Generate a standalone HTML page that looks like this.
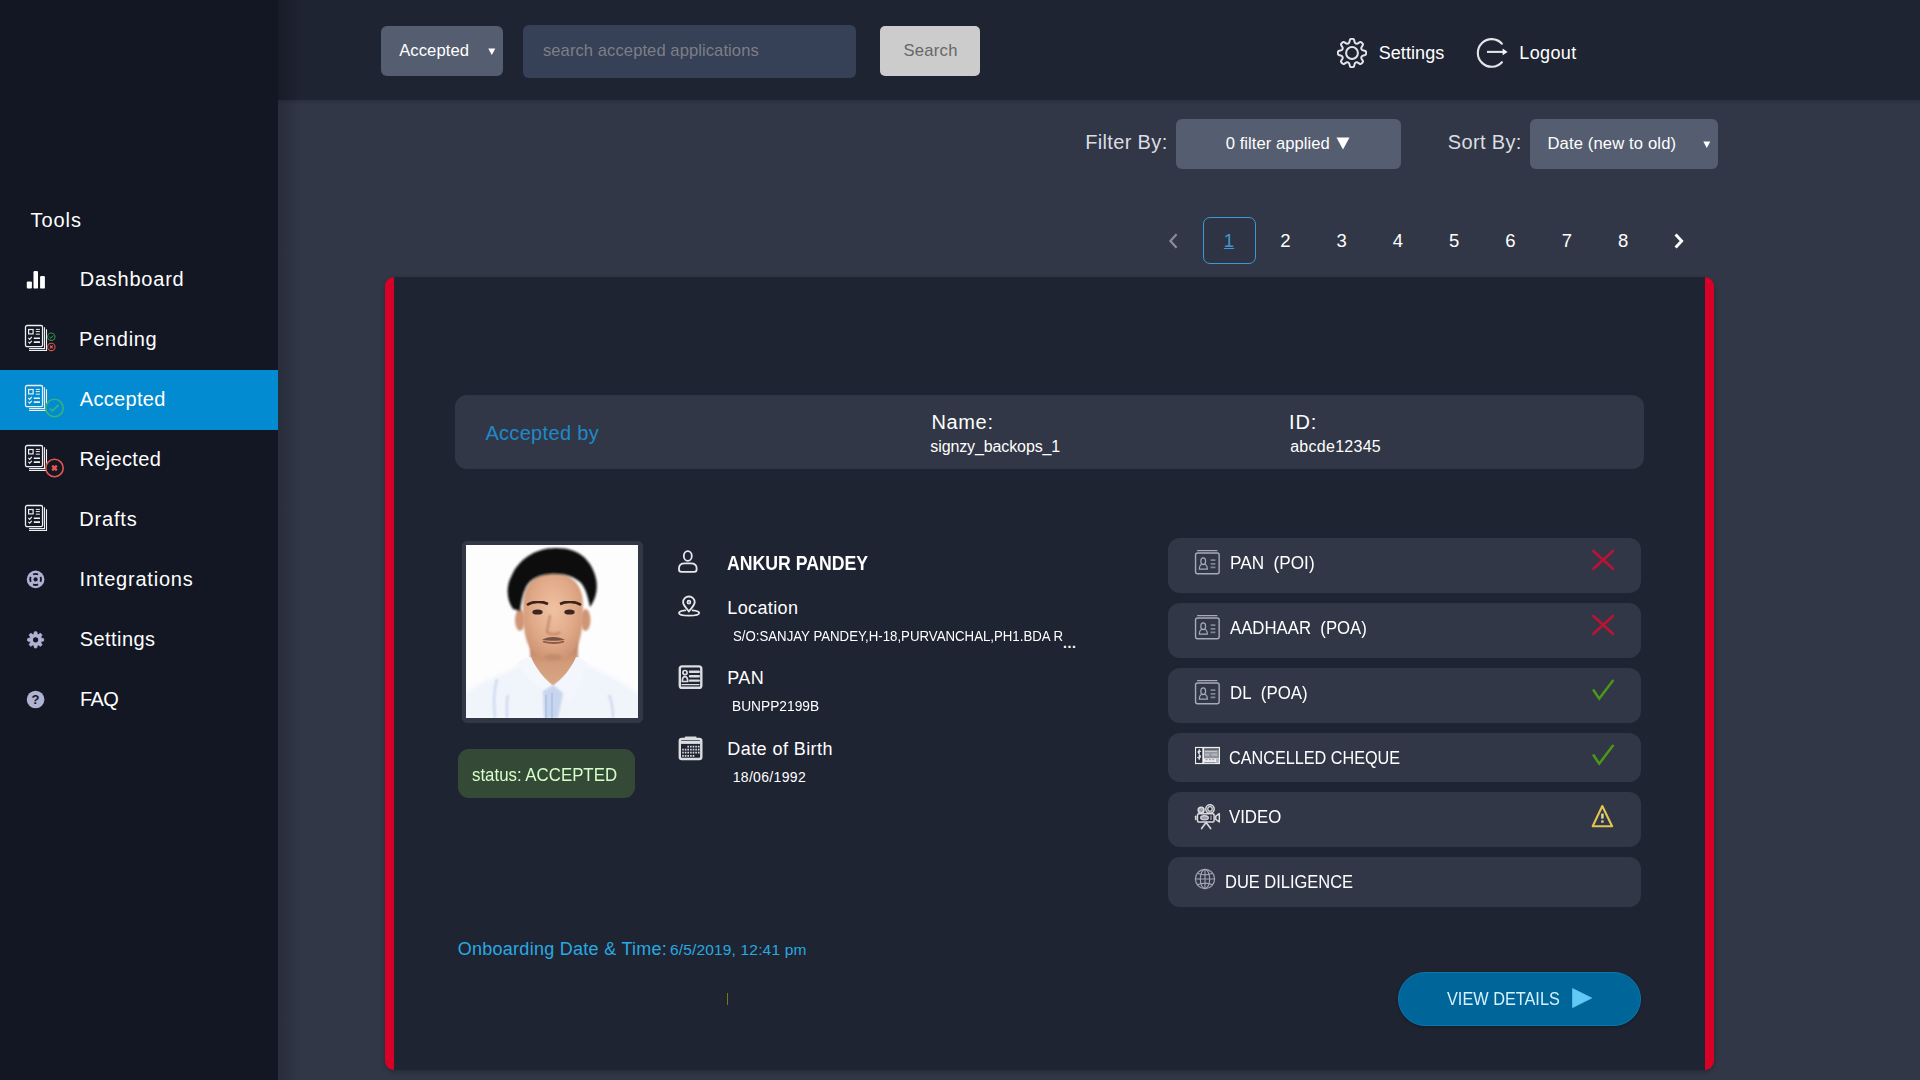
<!DOCTYPE html>
<html lang="en">
<head>
<meta charset="utf-8">
<title>Accepted Applications</title>
<style>
*{box-sizing:border-box;margin:0;padding:0}
html,body{width:1920px;height:1080px;overflow:hidden;background:#313746;font-family:"Liberation Sans",sans-serif;color:#fff}
.abs{position:absolute}
#sidebar{position:absolute;left:0;top:0;width:278px;height:1080px;background:#131623}
#topbar{position:absolute;left:278px;top:0;width:1642px;height:100px;background:#1f2433}
#topbar:before{content:"";position:absolute;left:0;top:0;width:24px;height:100px;background:linear-gradient(90deg,rgba(10,12,22,.35),rgba(10,12,22,0))}
#main:after{content:"";position:absolute;left:278px;top:100px;width:1642px;height:5px;background:linear-gradient(180deg,rgba(10,12,22,.16),rgba(10,12,22,0))}
#main:before{content:"";position:absolute;left:278px;top:100px;width:24px;height:980px;background:linear-gradient(90deg,rgba(10,12,22,.22),rgba(10,12,22,0))}
.os{font-family:"Liberation Sans",sans-serif}

.tb{position:absolute;white-space:nowrap}
.ctl{position:absolute;background:#555d70;border-radius:6px;color:#fff;font-size:16.6px}
.row{position:absolute;left:1168px;width:473px;background:#313746;border-radius:12px}
.t{position:absolute;white-space:nowrap;line-height:1}
.pg{position:absolute;top:229px;font-size:18.5px;line-height:24px;width:40px;text-align:center}
</style>
</head>
<body>
<div id="main">
<div id="sidebar">
  <span class="t" id="n_t" style="left:30.62px;top:209.71px;font-size:20px;letter-spacing:0.915px">Tools</span>
  <div class="abs" style="left:0;top:370px;width:278px;height:60px;background:#028bd0"></div>
  <span class="t" id="n0" style="left:79.70px;top:268.80px;font-size:20px;letter-spacing:0.769px">Dashboard</span>
  <span class="t" id="n1" style="left:79.12px;top:328.80px;font-size:20px;letter-spacing:0.702px">Pending</span>
  <span class="t" id="n2" style="left:79.82px;top:388.91px;font-size:20px;letter-spacing:0.303px">Accepted</span>
  <span class="t" id="n3" style="left:79.56px;top:448.91px;font-size:20px;letter-spacing:0.334px">Rejected</span>
  <span class="t" id="n4" style="left:79.13px;top:508.71px;font-size:20px;letter-spacing:0.843px">Drafts</span>
  <span class="t" id="n5" style="left:79.60px;top:568.71px;font-size:20px;letter-spacing:0.783px">Integrations</span>
  <span class="t" id="n6" style="left:79.68px;top:628.71px;font-size:20px;letter-spacing:0.455px">Settings</span>
  <span class="t" id="n7" style="left:79.90px;top:688.71px;font-size:20px;letter-spacing:-0.556px">FAQ</span>
  <svg class="abs" style="left:0;top:0" width="278" height="1080" viewBox="0 0 278 1080">
<defs><g id="doc"><g fill="none" stroke="#eeeff2"><rect x="1.5" y="1.5" width="17.05" height="21.15" rx="1.6" stroke-width="1.3"/><path d="M5.1 24.6H20.5V3.2" stroke-width="1.1"/><path d="M5 26.5H22.5V5.2" stroke-width="1.1"/><rect x="4.6" y="5.5" width="4.5" height="4.4" stroke-width="1.2"/><path d="M11.8 5.4H15.9M11.8 7.6H15.9M11.8 10.2H15.9" stroke-width="1"/><path d="M4.4 14L5.7 15.3 7.8 12.9M4.4 17.9L5.7 19.2 7.8 16.8" stroke-width="1.2"/><path d="M9.8 14.2H16M9.8 18.1H16" stroke-width="1.6"/></g></g></defs>
<g fill="#fff"><rect x="26.8" y="281.6" width="5.1" height="7" rx="1"/><rect x="33.5" y="271" width="4.5" height="17.6" rx="1.2"/><rect x="40.1" y="276" width="4.8" height="12.6" rx="1.2"/></g>
<use href="#doc" x="24" y="324"/>
<circle cx="51.3" cy="336.7" r="3.7" fill="#131623" stroke="#2f8f45" stroke-width="1.1"/><path d="M49.4 336.8l1.4 1.4 2.5-2.8" fill="none" stroke="#3aa655" stroke-width="1"/>
<circle cx="51.3" cy="346.9" r="3.7" fill="#131623" stroke="#d9534f" stroke-width="1.1"/><path d="M49.9 345.5l2.8 2.8M52.7 345.5l-2.8 2.8" fill="none" stroke="#e0564f" stroke-width="1.1"/>
<use href="#doc" x="24" y="384"/>
<circle cx="54.5" cy="408" r="8.7" fill="#028bd0" stroke="#35b279" stroke-width="1.6"/><path d="M49.9 408.6l2.6 2.3 6.2-6.1" fill="none" stroke="#35b279" stroke-width="1.7"/>
<use href="#doc" x="24" y="444"/>
<circle cx="54.5" cy="468" r="8.7" fill="#131623" stroke="#e2574f" stroke-width="1.6"/><path d="M52.2 465.7l4.6 4.6M56.8 465.7l-4.6 4.6" fill="none" stroke="#e2574f" stroke-width="2.4"/>
<use href="#doc" x="24" y="504"/>
<circle cx="35.6" cy="579.4" r="8.8" fill="#b0b2d2"/><circle cx="35.6" cy="579.4" r="2.1" fill="#131623"/><path d="M33.10 574.50 A5.50 5.50 0 0 1 38.10 574.50M40.50 576.90 A5.50 5.50 0 0 1 40.50 581.90M38.10 584.30 A5.50 5.50 0 0 1 33.10 584.30M30.70 581.90 A5.50 5.50 0 0 1 30.70 576.90" fill="none" stroke="#131623" stroke-width="1.9"/>
<path d="M33.42 634.36Q33.97 634.13 34.06 633.53L34.23 632.30Q34.32 631.70 34.92 631.70L36.28 631.70Q36.88 631.70 36.97 632.30L37.14 633.53Q37.23 634.13 37.78 634.36L37.91 634.41Q38.46 634.64 38.94 634.28L39.94 633.53Q40.42 633.17 40.84 633.59L41.81 634.56Q42.23 634.98 41.87 635.46L41.12 636.46Q40.76 636.94 40.99 637.49L41.04 637.62Q41.27 638.17 41.87 638.26L43.10 638.43Q43.70 638.52 43.70 639.12L43.70 640.48Q43.70 641.08 43.10 641.17L41.87 641.34Q41.27 641.43 41.04 641.98L40.99 642.11Q40.76 642.66 41.12 643.14L41.87 644.14Q42.23 644.62 41.81 645.04L40.84 646.01Q40.42 646.43 39.94 646.07L38.94 645.32Q38.46 644.96 37.91 645.19L37.78 645.24Q37.23 645.47 37.14 646.07L36.97 647.30Q36.88 647.90 36.28 647.90L34.92 647.90Q34.32 647.90 34.23 647.30L34.06 646.07Q33.97 645.47 33.42 645.24L33.29 645.19Q32.74 644.96 32.26 645.32L31.26 646.07Q30.78 646.43 30.36 646.01L29.39 645.04Q28.97 644.62 29.33 644.14L30.08 643.14Q30.44 642.66 30.21 642.11L30.16 641.98Q29.93 641.43 29.33 641.34L28.10 641.17Q27.50 641.08 27.50 640.48L27.50 639.12Q27.50 638.52 28.10 638.43L29.33 638.26Q29.93 638.17 30.16 637.62L30.21 637.49Q30.44 636.94 30.08 636.46L29.33 635.46Q28.97 634.98 29.39 634.56L30.36 633.59Q30.78 633.17 31.26 633.53L32.26 634.28Q32.74 634.64 33.29 634.41Z" fill="#b0b2d2" stroke="#b0b2d2" stroke-width="0.8" stroke-linejoin="round"/><circle cx="35.6" cy="639.8" r="2.6" fill="#131623"/>
<circle cx="35.6" cy="699.5" r="8.8" fill="#b0b2d2"/><text x="35.6" y="704.1" text-anchor="middle" font-family="Liberation Sans, sans-serif" font-weight="bold" font-size="13" fill="#131623">?</text>
</svg>
</div>
<div id="topbar">

  <div class="ctl" style="left:103px;top:26px;width:122px;height:50px"><span class="t" id="t_sel" style="left:18.15px;top:17.11px;font-size:16.6px;letter-spacing:0.093px">Accepted</span>
    <svg class="abs" style="left:107.2px;top:22px" width="8" height="8" viewBox="0 0 8 8"><path d="M0.3 0.5h7L3.8 7z" fill="#fff"/></svg></div>
  <div class="abs" style="left:245px;top:25px;width:333px;height:52.5px;background:#364057;border-radius:6px"><span class="t" id="t_ph" style="left:19.94px;top:18.11px;font-size:16.6px;color:#7d7f85;letter-spacing:0.066px">search accepted applications</span></div>
  <div class="abs" style="left:602px;top:26px;width:100px;height:50px;background:#cccccc;border-radius:5px"><span class="t" id="t_sb" style="left:23.56px;top:17.11px;font-size:16.6px;color:#666;letter-spacing:0.252px">Search</span></div>
  <svg class="abs" style="left:1059px;top:38px" width="30" height="30" viewBox="0 0 30 30" fill="none" stroke="#e4e5ea" stroke-width="2" stroke-linejoin="round"><path d="M11.09 5.55Q12.25 5.07 12.51 3.60L12.74 2.32Q13.01 0.84 14.51 0.84L15.49 0.84Q16.99 0.84 17.26 2.32L17.49 3.60Q17.75 5.07 18.91 5.55L18.91 5.55Q20.07 6.04 21.30 5.18L22.37 4.44Q23.61 3.58 24.67 4.64L25.36 5.33Q26.42 6.39 25.56 7.63L24.82 8.70Q23.96 9.93 24.45 11.09L24.45 11.09Q24.93 12.25 26.40 12.51L27.68 12.74Q29.16 13.01 29.16 14.51L29.16 15.49Q29.16 16.99 27.68 17.26L26.40 17.49Q24.93 17.75 24.45 18.91L24.45 18.91Q23.96 20.07 24.82 21.30L25.56 22.37Q26.42 23.61 25.36 24.67L24.67 25.36Q23.61 26.42 22.37 25.56L21.30 24.82Q20.07 23.96 18.91 24.45L18.91 24.45Q17.75 24.93 17.49 26.40L17.26 27.68Q16.99 29.16 15.49 29.16L14.51 29.16Q13.01 29.16 12.74 27.68L12.51 26.40Q12.25 24.93 11.09 24.45L11.09 24.45Q9.93 23.96 8.70 24.82L7.63 25.56Q6.39 26.42 5.33 25.36L4.64 24.67Q3.58 23.61 4.44 22.37L5.18 21.30Q6.04 20.07 5.55 18.91L5.55 18.91Q5.07 17.75 3.60 17.49L2.32 17.26Q0.84 16.99 0.84 15.49L0.84 14.51Q0.84 13.01 2.32 12.74L3.60 12.51Q5.07 12.25 5.55 11.09L5.55 11.09Q6.04 9.93 5.18 8.70L4.44 7.63Q3.58 6.39 4.64 5.33L5.33 4.64Q6.39 3.58 7.63 4.44L8.70 5.18Q9.93 6.04 11.09 5.55Z"/><circle cx="15" cy="15" r="5.9"/></svg>
  <span class="t" id="t_set" style="left:1100.72px;top:44.11px;font-size:18px;letter-spacing:0.065px">Settings</span>
  <svg class="abs" style="left:1198px;top:37px" width="34" height="32" viewBox="0 0 34 32" fill="none" stroke="#e4e5ea" stroke-width="2.1" stroke-linecap="round"><path d="M25.9 6.72A13.8 13.8 0 1 0 25.9 25.18"/><path d="M11 14.9h16" stroke-linecap="butt"/><path d="M26.6 11.6L31.6 14.9l-5 3.3z" fill="#f4f4f6" stroke="none"/></svg>
  <span class="t" id="t_lo" style="left:1241.32px;top:44.11px;font-size:18px;letter-spacing:0.354px">Logout</span>
</div>

<span class="t" id="t_fb" style="left:1085.19px;top:131.76px;font-size:20px;color:#dcdde2;letter-spacing:0.346px">Filter By:</span>
<div class="ctl" style="left:1176px;top:119px;width:225px;height:50px"><span class="t" id="t_fa" style="left:49.71px;top:16.71px;font-size:16.6px;letter-spacing:0.049px">0 filter applied</span>
  <svg class="abs" style="left:160px;top:18px" width="14" height="13" viewBox="0 0 14 13"><path d="M0.5 0.5h13L7 12.5z" fill="#fff"/></svg></div>
<span class="t" id="t_so" style="left:1447.76px;top:131.71px;font-size:20px;color:#dcdde2;letter-spacing:0.346px">Sort By:</span>
<div class="ctl" style="left:1530px;top:119px;width:188px;height:50px"><span class="t" id="t_dt" style="left:17.41px;top:16.71px;font-size:16.6px;letter-spacing:0.144px">Date (new to old)</span>
  <svg class="abs" style="left:172.5px;top:21.5px" width="8" height="8" viewBox="0 0 8 8"><path d="M0.3 0.5h7L3.8 7z" fill="#fff"/></svg></div>

<svg class="abs" style="left:1166px;top:231px" width="14" height="20" viewBox="0 0 14 20" fill="none" stroke="#8a8d96" stroke-width="2.2"><path d="M10.6 3.2L4.4 10l6.2 6.8"/></svg>
<div class="abs" style="left:1203px;top:217px;width:52.5px;height:46.5px;border:1.5px solid #3f97d3;border-radius:7px;background:#2e3443"></div>
<span class="pg" id="p1" style="left:1209px;color:#3f97d3;text-decoration:underline">1</span>
<span class="pg" id="p2" style="left:1265.3px">2</span>
<span class="pg" id="p3" style="left:1321.6px">3</span>
<span class="pg" id="p4" style="left:1377.9px">4</span>
<span class="pg" id="p5" style="left:1434.2px">5</span>
<span class="pg" id="p6" style="left:1490.5px">6</span>
<span class="pg" id="p7" style="left:1546.8px">7</span>
<span class="pg" id="p8" style="left:1603.1px">8</span>
<svg class="abs" style="left:1672px;top:231px" width="14" height="20" viewBox="0 0 14 20" fill="none" stroke="#fff" stroke-width="2.9"><path d="M3.6 3.4L9.7 10l-6.1 6.6"/></svg>

<div id="card" class="abs" style="left:385px;top:277px;width:1329px;height:793px;background:#1f2433;border-left:9px solid #d80027;border-right:9px solid #d80027;border-radius:9px;box-shadow:0 2px 5px rgba(0,0,0,.25)"></div>

<div class="abs" style="left:455px;top:395px;width:1189px;height:74px;background:#313746;border-radius:12px"></div>
<span class="t" id="t_ab" style="left:485.38px;top:422.80px;font-size:20px;color:#2089c9;letter-spacing:0.321px">Accepted by</span>
<span class="t" id="t_nm" style="left:931.39px;top:412.21px;font-size:20px;letter-spacing:0.664px">Name:</span>
<span class="t" id="t_nv" style="left:930.36px;top:438.80px;font-size:16px;letter-spacing:-0.118px">signzy_backops_1</span>
<span class="t" id="t_id" style="left:1289.01px;top:412.21px;font-size:20px;letter-spacing:0.900px">ID:</span>
<span class="t" id="t_iv" style="left:1290.16px;top:438.80px;font-size:16px;letter-spacing:0.277px">abcde12345</span>

<div class="abs" style="left:461.5px;top:540.5px;width:181px;height:182px;background:#313746;border-radius:5px"></div>
<svg class="abs" style="left:466px;top:545px" width="172" height="173" viewBox="0 0 172 173">
<defs>
<filter id="b1" x="-20%" y="-20%" width="140%" height="140%"><feGaussianBlur stdDeviation="1.3"/></filter>
<filter id="b2" x="-20%" y="-20%" width="140%" height="140%"><feGaussianBlur stdDeviation="2.4"/></filter>
<filter id="b3" x="-20%" y="-20%" width="140%" height="140%"><feGaussianBlur stdDeviation="0.7"/></filter>
<radialGradient id="skin" cx="0.5" cy="0.42" r="0.62"><stop offset="0" stop-color="#f0c2a3"/><stop offset="0.6" stop-color="#e0a987"/><stop offset="1" stop-color="#c9906f"/></radialGradient>
<linearGradient id="neck" x1="0" y1="0" x2="0" y2="1"><stop offset="0" stop-color="#b87e5e"/><stop offset="0.5" stop-color="#d39c7a"/><stop offset="1" stop-color="#d9a685"/></linearGradient>
<clipPath id="pc"><rect width="172" height="173"/></clipPath>
</defs>
<g clip-path="url(#pc)">
<rect width="172" height="173" fill="#fdfdfe"/>
<!-- shirt -->
<path d="M-4 173V150C14 136 40 128 58 118L87 140L117 118C136 127 160 138 176 152V173Z" fill="#f0f4fb" filter="url(#b2)"/>
<path d="M31 134C27 148 28 160 29 173M42 150C40 158 41 166 41 173M143 150C147 158 147 166 147 173" stroke="#c9d6ee" stroke-width="2" fill="none" filter="url(#b1)"/>
<!-- neck -->
<path d="M64 96V118C70 128 80 136 87 141C95 135 106 127 112 117V96Z" fill="url(#neck)" filter="url(#b1)"/>
<!-- collar -->
<path d="M51 118C56 114 61 112 65 112C70 124 79 134 87 141L80 147C68 140 57 130 51 118Z" fill="#f4f7fc" filter="url(#b3)"/>
<path d="M121 118C117 114 113 112 110 112C105 124 96 134 87 141L103 158C111 146 118 132 121 118Z" fill="#f3f6fc" filter="url(#b3)"/>
<path d="M77 146L87 140L97 148L92 173H78Z" fill="#c7d6ee" filter="url(#b1)"/>
<path d="M80 150V173M86 148V173" stroke="#9fb5dc" stroke-width="1" filter="url(#b3)"/>
<!-- ears -->
<ellipse cx="54" cy="75" rx="5" ry="11" fill="#cf9574" filter="url(#b1)"/>
<ellipse cx="119.5" cy="75" rx="5" ry="11" fill="#cf9574" filter="url(#b1)"/>
<!-- face -->
<path d="M57 60C57 38 70 28 87 28S117 38 117 60C117 84 115 99 106 108C99 114 93 116.5 87 116.5S75 114 68 108C59 99 57 84 57 60Z" fill="url(#skin)" filter="url(#b1)"/>
<!-- hair -->
<path d="M47 64C40 54 40 40 46 30C52 16 68 3 90 3C112 3 124 14 129 30C133 42 130 54 124 62C122 52 120 44 115 38C108 31 96 28 84 29C72 30 64 34 60 42C56 50 55 58 54 66Z" fill="#0c0c11" filter="url(#b1)"/>
<!-- brows & eyes -->
<path d="M61 60C67 56 76 56 82 59M94 59C100 56 109 56 115 60" stroke="#3a241c" stroke-width="2.6" fill="none" filter="url(#b3)"/>
<ellipse cx="71.5" cy="67" rx="5.2" ry="2.6" fill="#3b2620" filter="url(#b3)"/>
<ellipse cx="103.5" cy="67" rx="5.2" ry="2.6" fill="#3b2620" filter="url(#b3)"/>
<!-- nose shading -->
<path d="M84 70C83 78 81 84 81 87C84 90 91 90 94 87" stroke="#c08562" stroke-width="2" fill="none" filter="url(#b1)"/>
<!-- mustache / mouth -->
<path d="M76 95C81 91 93 91 99 95C93 96 82 96 76 95Z" fill="#7a5346" filter="url(#b3)"/>
<path d="M77 96.5C83 98.5 93 98.5 98 96.5" stroke="#8c5a4a" stroke-width="1.8" fill="none" filter="url(#b3)"/>
<ellipse cx="87" cy="112" rx="9" ry="3" fill="#b58568" opacity=".6" filter="url(#b1)"/>
</g>
</svg>
<div class="abs" style="left:458px;top:749px;width:177px;height:49px;background:#354a36;border-radius:11px"></div>
<span class="t" id="t_st" style="left:471.60px;top:766.80px;font-size:17.5px;color:#d6ffca;transform-origin:0 0;transform:scaleX(0.9622)">status: ACCEPTED</span>

<svg class="abs" style="left:670px;top:540px" width="40" height="230" viewBox="670 540 40 230" fill="none" stroke="#e6e7eb" stroke-width="1.8" stroke-linejoin="round" stroke-linecap="round">
<path d="M679 569.6V568C679 564.6 681.4 563.3 684.8 563.3H690.8C694.2 563.3 696.6 564.6 696.6 568V569.6Q696.6 571.9 694.3 571.9H681.3Q679 571.9 679 569.6Z"/><ellipse cx="687.8" cy="556" rx="4" ry="4.9" fill="#1f2433"/>
<path d="M688.9 611.6C686.4 607.6 683.1 605.6 683.1 602.3A5.8 5.8 0 1 1 694.7 602.3C694.7 605.6 691.4 607.6 688.9 611.6Z"/><circle cx="688.9" cy="602.2" r="1.7" fill="#9a9ca6" stroke-width="1.3"/><path d="M685.2 610.3C681.5 610.7 679 611.7 679 613C679 614.7 683.4 615.7 689 615.7S699.2 614.7 699.2 613C699.2 611.7 696.5 610.7 692.6 610.3"/>
<rect x="679.8" y="666.4" width="21.5" height="21.4" rx="2.4" stroke-width="2.4" stroke="#dcdde1"/><g stroke="#dcdde1" stroke-width="1.7"><circle cx="685" cy="672.6" r="2.1"/><path d="M682.3 681.5C682.3 678.2 683.5 676.6 685 676.6S687.7 678.2 687.7 681.5Z"/><path d="M690 671.8H698.8M690 676.3H698.8M690 680.6H698.8" stroke-width="2.4"/><path d="M682 684.6H699" stroke-width="1.3"/></g>
<rect x="679.8" y="739" width="21.5" height="20" rx="2" stroke-width="2.4" stroke="#dcdde1"/><path d="M680.5 742.4H700.6" stroke="#dcdde1" stroke-width="3" stroke-linecap="butt"/><path d="M685.5 737.4H695.8" stroke="#d9dade" stroke-width="1.6"/><path d="M687.4 746.6h1.6M690.1 746.6h1.6M692.7 746.6h1.6M695.3 746.6h1.6M697.9 746.6h1.6M682.2 749.6h1.6M684.8 749.6h1.6M687.4 749.6h1.6M690.1 749.6h1.6M692.7 749.6h1.6M695.3 749.6h1.6M697.9 749.6h1.6M682.2 752.7h1.6M684.8 752.7h1.6M687.4 752.7h1.6M690.1 752.7h1.6M692.7 752.7h1.6M695.3 752.7h1.6M697.9 752.7h1.6M682.2 755.8h1.6M684.8 755.8h1.6M687.4 755.8h1.6M690.1 755.8h1.6M692.7 755.8h1.6" stroke="#d9dade" stroke-width="1.7" stroke-linecap="butt"/>
</svg>
<span class="t" id="t_an" style="left:727.14px;top:553.25px;font-size:20px;font-weight:bold;transform-origin:0 0;transform:scaleX(0.8834)">ANKUR PANDEY</span>
<span class="t" id="t_lc" style="left:727.34px;top:599.21px;font-size:18px;letter-spacing:0.369px">Location</span>
<span class="t" id="t_ad" style="left:733.30px;top:628.80px;font-size:14px;transform-origin:0 0;transform:scaleX(0.9449)">S/O:SANJAY PANDEY,H-18,PURVANCHAL,PH1.BDA R</span>
<span class="t" id="t_el" style="left:1063px;top:635.6px;font-size:14px;letter-spacing:.6px;font-weight:bold">...</span>
<span class="t" id="t_pn" style="left:727.37px;top:669.00px;font-size:18px;letter-spacing:0.318px">PAN</span>
<span class="t" id="t_pv" style="left:732.22px;top:698.90px;font-size:14px;transform-origin:0 0;transform:scaleX(0.9816)">BUNPP2199B</span>
<span class="t" id="t_db" style="left:727.37px;top:740.01px;font-size:18px;letter-spacing:0.416px">Date of Birth</span>
<span class="t" id="t_dv" style="left:732.65px;top:769.80px;font-size:14px;letter-spacing:0.336px">18/06/1992</span>

<div class="row" style="top:538px;height:55px"></div>
<div class="row" style="top:603px;height:55px"></div>
<div class="row" style="top:668px;height:55px"></div>
<div class="row" style="top:733px;height:49px"></div>
<div class="row" style="top:792px;height:55px"></div>
<div class="row" style="top:857px;height:50px"></div>
<span class="t" id="r1" style="left:1229.85px;top:553.80px;font-size:18px;transform-origin:0 0;transform:scaleX(0.9542)">PAN&nbsp; (POI)</span>
<span class="t" id="r2" style="left:1230.20px;top:618.91px;font-size:18px;transform-origin:0 0;transform:scaleX(0.9310)">AADHAAR&nbsp; (POA)</span>
<span class="t" id="r3" style="left:1229.78px;top:684.11px;font-size:18px;transform-origin:0 0;transform:scaleX(0.9347)">DL&nbsp; (POA)</span>
<span class="t" id="r4" style="left:1229.49px;top:748.71px;font-size:18px;transform-origin:0 0;transform:scaleX(0.9002)">CANCELLED CHEQUE</span>
<span class="t" id="r5" style="left:1229.38px;top:807.71px;font-size:18px;transform-origin:0 0;transform:scaleX(0.9326)">VIDEO</span>
<span class="t" id="r6" style="left:1224.97px;top:872.51px;font-size:18px;transform-origin:0 0;transform:scaleX(0.9147)">DUE DILIGENCE</span>
<svg class="abs" style="left:1188px;top:540px" width="440" height="360" viewBox="1188 540 440 360" fill="none" stroke-linejoin="round" stroke-linecap="round">
<defs><g id="idc" stroke="#a6abba"><path d="M1197.6 550.6H1216.9" stroke-width="1.3"/><rect x="1195.55" y="553" width="23.6" height="20.8" rx="2" stroke-width="1.4"/><ellipse cx="1203.2" cy="561.2" rx="2.4" ry="3.4" stroke-width="1.2"/><path d="M1201.2 564.6C1199.8 565.4 1199.3 566.4 1199.3 569.1H1207.4C1207.4 566.4 1206.9 565.4 1205.5 564.6" stroke-width="1.2"/><path d="M1210.6 560.2H1215.4M1210.6 563.8H1215.4M1210.6 567.3H1215.4" stroke-width="1.8" stroke-linecap="butt" stroke="#7f8494"/></g></defs>
<use href="#idc"/><use href="#idc" y="65"/><use href="#idc" y="130"/>
<rect x="1195" y="746.9" width="25" height="17.2" fill="#eceef2"/><rect x="1196.1" y="748.1" width="6.2" height="14.8" fill="#2b303d"/><path d="M1200.6 751.4C1198.6 750.2 1197.4 751.6 1198.6 753.2L1200 755.3C1201.2 757.2 1199.8 758.6 1197.7 757.4M1199.2 749.6V759.6" stroke="#e8e9ee" stroke-width="1.1"/><rect x="1204" y="748.1" width="15" height="10.2" fill="#8f9299"/><path d="M1204.4 749.2H1218.6" stroke="#4d515c" stroke-width="1.1" stroke-linecap="butt"/><path d="M1205 751.6H1217" stroke="#c9cbd0" stroke-width="1" stroke-linecap="butt"/><path d="M1205 754.6H1209.6M1211.6 754.6H1217.4" stroke="#b4b6bc" stroke-width="2.2" stroke-linecap="butt"/><rect x="1216" y="758.6" width="3" height="4.4" fill="#b9bbc1"/><path d="M1205.6 759.7h2M1209 759.7h2M1212.2 759.7h2" stroke="#8f9299" stroke-width="1" stroke-linecap="butt"/><path d="M1204.2 762.6H1215.6" stroke="#7d8088" stroke-width="0.9" stroke-linecap="butt"/>
<g stroke="#dadbe0" stroke-width="1.5"><circle cx="1201.1" cy="810.1" r="2.9" fill="#9da0aa"/><circle cx="1210" cy="808.9" r="4.2"/><circle cx="1210" cy="808.9" r="2.2" stroke-width="1.3" fill="#1f2433"/><rect x="1197.5" y="813.7" width="16.6" height="8.3" rx="1.2" fill="#262b38"/><ellipse cx="1204.5" cy="817.8" rx="3.9" ry="2.2" fill="#9da0aa" stroke-width="1.1"/><path d="M1211 815.6V820" stroke="#8a8d97" stroke-width="1.6" stroke-linecap="butt"/><path d="M1195.7 816.2V819.4" stroke-width="1.6"/><path d="M1215.8 816.2L1219.3 813.6V822L1215.8 819.4Z" fill="#262b38"/><path d="M1206.1 822.6L1201.6 828.6M1206.1 822.6L1210.7 828.6" stroke-width="1.6"/></g>
<g stroke="#a2a6b3" stroke-width="1.15"><circle cx="1205" cy="879" r="9.6"/><ellipse cx="1205" cy="879" rx="4.7" ry="9.6"/><path d="M1205 869.4V888.6M1195.4 879H1214.6M1197.4 873.3C1202 875.2 1208 875.2 1212.6 873.3M1197.4 884.7C1202 882.8 1208 882.8 1212.6 884.7"/></g>
<g stroke="#bd1231" stroke-width="2.6"><path d="M1593.4 551L1612.9 568.8M1612.9 551L1593.4 568.8"/><path d="M1593.4 616L1612.9 633.8M1612.9 616L1593.4 633.8"/></g>
<g stroke="#4a9916" stroke-width="2.5" stroke-linejoin="miter"><path d="M1593.6 690.2L1599.2 698.7L1612.8 680.8"/><path d="M1593.6 755.2L1599.2 763.7L1612.8 745.8"/></g>
<path d="M1602.3 806L1592.7 826.2H1612.1Z" stroke="#e2c54e" stroke-width="2.1"/><path d="M1602.4 813.6V818.6" stroke="#e6d58e" stroke-width="2.5" stroke-linecap="butt"/><path d="M1602.4 820.4V822.7" stroke="#d9ccA0" stroke-width="2.5" stroke-linecap="butt"/>
</svg>

<span class="t" id="t_ob" style="left:457.70px;top:940.00px;font-size:18px;color:#29a9e0;letter-spacing:0.274px">Onboarding Date &amp; Time:</span>
<span class="t" id="t_ov" style="left:669.91px;top:942.00px;font-size:15.5px;color:#29a9e0;letter-spacing:0.170px">6/5/2019, 12:41 pm</span>
<div class="abs" style="left:727px;top:993px;width:1px;height:12px;background:#6f7a1e"></div>

<div class="abs" style="left:1398px;top:972px;width:243px;height:54px;border-radius:27px;background:#006699;border:1px solid #0a76ad;box-shadow:0 1px 3px rgba(0,0,0,.3)"></div>
<span class="t" id="t_vd" style="left:1447.33px;top:990.00px;font-size:18px;color:#d4f1ff;transform-origin:0 0;transform:scaleX(0.9046)">VIEW DETAILS</span>
<svg class="abs" style="left:1571px;top:987px" width="22" height="22" viewBox="0 0 22 22"><path d="M1.6 1.6L20.6 11 1.6 20.6z" fill="#62c8f5" stroke="#62c8f5" stroke-width="0.8" stroke-linejoin="round"/></svg>

</div>
</body>
</html>
